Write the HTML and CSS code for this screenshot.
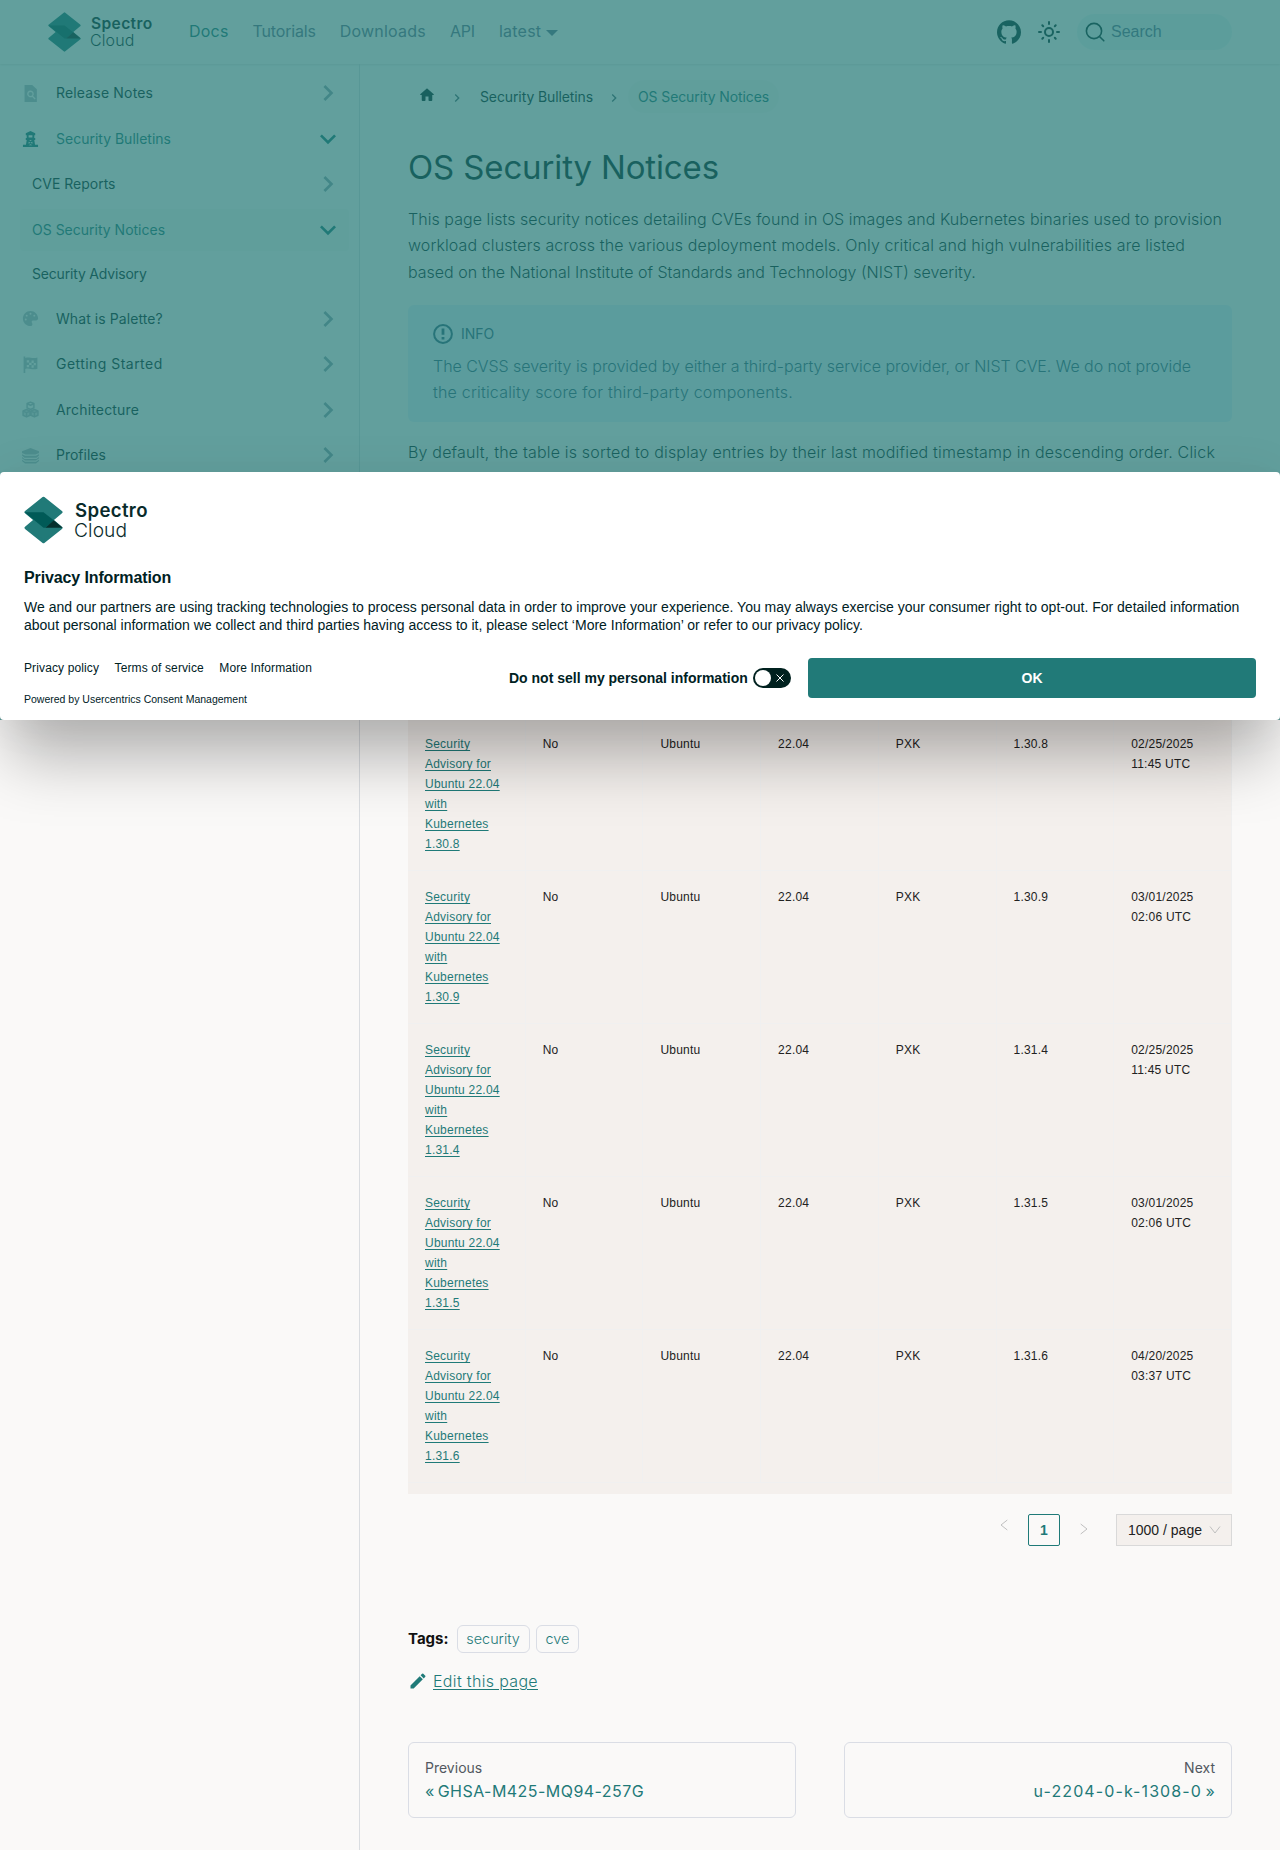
FILE: index.html
```html
<!DOCTYPE html>
<html lang="en">
<head>
<meta charset="utf-8">
<title>OS Security Notices</title>
<link rel="stylesheet" href="styles.css">
</head>
<body>
<svg class="defs" width="0" height="0">
  <symbol id="logo" viewBox="0 0 40 48">
    <g stroke-linejoin="round" stroke-width="3">
      <path d="M20 1.7 38 16 20 31 2 16z" fill="#217a78" stroke="#217a78"/>
      <path d="M20 17 38 32 20 46.3 2 32z" fill="#217a78" stroke="#217a78"/>
    </g>
    <path d="M.6 16H20l10.500 8.300L22 32h-2z" fill="#005a57"/>
    <path d="M30.500 24.300 39.600 32H22z" fill="#06302d"/>
  </symbol>
  <symbol id="chev" viewBox="0 0 24 24"><path d="M7.410 15.410 12 10.830l4.590 4.580L18 14l-6-6-6 6z" fill="currentColor"/></symbol>
</svg>
<header class="navbar">
  <a class="brand"><svg class="brand-mark"><use href="#logo"/></svg><span class="brand-name"><b>Spectro</b><i>Cloud</i></span></a>
  <nav class="nav-links">
    <a class="active">Docs</a><a class="tight">Tutorials</a><a>Downloads</a><a class="tight">API</a><a>latest<i class="caret"></i></a>
  </nav>
  <div class="nav-tools">
    <svg width="24" height="24" viewBox="0 0 24 24" fill="#08302f"><path d="M12 .297c-6.630 0-12 5.373-12 12 0 5.303 3.438 9.800 8.205 11.385.6.113.82-.258.82-.577 0-.285-.01-1.040-.015-2.040-3.338.724-4.042-1.610-4.042-1.610C4.422 18.070 3.633 17.700 3.633 17.700c-1.087-.744.084-.729.084-.729 1.205.084 1.838 1.236 1.838 1.236 1.070 1.835 2.809 1.305 3.495.998.108-.776.417-1.305.76-1.605-2.665-.3-5.466-1.332-5.466-5.930 0-1.310.465-2.380 1.235-3.220-.135-.303-.54-1.523.105-3.176 0 0 1.005-.322 3.300 1.230.96-.267 1.980-.399 3-.405 1.020.006 2.040.138 3 .405 2.280-1.552 3.285-1.230 3.285-1.230.645 1.653.24 2.873.12 3.176.765.84 1.230 1.910 1.230 3.220 0 4.610-2.805 5.625-5.475 5.920.42.36.81 1.096.81 2.220 0 1.606-.015 2.896-.015 3.286 0 .315.21.69.825.57C20.565 22.092 24 17.592 24 12.297c0-6.627-5.373-12-12-12"/></svg>
    <svg width="24" height="24" viewBox="0 0 24 24" fill="none" stroke="#08302f" stroke-width="2" stroke-linecap="round"><circle cx="12" cy="12" r="4"/><path d="M12 2v2M12 20v2M2 12h2M20 12h2M5.300 5.300l.9.9M17.800 17.800l.9.9M5.300 18.700l.9-.9M17.800 6.200l.9-.9"/></svg>
    <div class="search"><svg width="20" height="20" viewBox="0 0 20 20" fill="none" stroke="#08302f" stroke-width="1.600" stroke-linecap="round"><circle cx="9" cy="9" r="7.600"/><path d="m14.500 14.500 4.300 4.300"/></svg><span>Search</span></div>
  </div>
</header>
<div class="layout">
  <aside class="sidebar">
    <a class="item"><svg class="ico" viewBox="0 0 16 20"><path fill-rule="evenodd" d="M1 0h9l5.500 5v15H1zM8 6.500a4 4 0 1 0 2 7.500l3 3 1-1-3-3a4 4 0 0 0-3-6.500zm0 1.700a2.400 2.400 0 1 1 0 4.800 2.400 2.400 0 0 1 0-4.800z" fill="currentColor"/></svg><span class="w2">Release Notes</span><svg class="arr"><use href="#chev"/></svg></a>
    <a class="item on open"><svg class="ico" viewBox="0 0 18 18"><path fill-rule="evenodd" d="M9 1l5 2.500v2h-1v3h1v2h-1l.8 5H17V18H1v-2.500h3.200l.8-5H4v-2h1v-3H4v-2zM7 5.500v2.500h4V5.500zM7.500 10.500 9 11.700l1.500-1.200zM7 12.500v2l2-1zm4 0-2 1 2 1zM7 16.200h4L9 15z" fill="currentColor"/></svg><span>Security Bulletins</span><svg class="arr"><use href="#chev"/></svg></a>
    <a class="item sub"><span>CVE Reports</span><svg class="arr"><use href="#chev"/></svg></a>
    <a class="item sub on open cur"><span>OS Security Notices</span><svg class="arr"><use href="#chev"/></svg></a>
    <a class="item sub leaf"><span class="tight">Security Advisory</span></a>
    <a class="item"><svg class="ico" viewBox="-30 -30 572 572"><path d="M512 256c0 .9 0 1.800 0 2.700c-.4 36.500-33.600 61.300-70.100 61.300H344c-26.500 0-48 21.500-48 48c0 3.400 .4 6.700 1 9.900c2.100 10.200 6.500 20 10.800 29.900c6.100 13.800 12.100 27.500 12.100 42c0 31.800-21.600 60.700-53.400 62c-3.500 .1-7 .2-10.600 .2C114.600 512 0 397.400 0 256S114.600 0 256 0S512 114.600 512 256zM128 288a32 32 0 1 0 -64 0 32 32 0 1 0 64 0zm0-96a32 32 0 1 0 0-64 32 32 0 1 0 0 64zM288 96a32 32 0 1 0 -64 0 32 32 0 1 0 64 0zm96 96a32 32 0 1 0 0-64 32 32 0 1 0 0 64z" fill="currentColor"/></svg><span class="w1">What is Palette?</span><svg class="arr"><use href="#chev"/></svg></a>
    <a class="item"><svg class="ico" viewBox="0 0 16 16"><path fill-rule="evenodd" d="M1.500.5h1.600v1.300c4-1.600 6 1.300 11.400-.3v10.500c-5 1.700-7.500-1.300-11.400.2V16H1.500zM4.500 4v2.200h2.200V4zm4.500.3v2.200h2V4.300zM6.700 6.300v2.200H9V6.300zM4.500 8.500v2.200h2.200V8.500zM9 8.800V11h2V8.800zm2-2.300v2.200h2V6.500z" fill="currentColor"/></svg><span class="w3">Getting Started</span><svg class="arr"><use href="#chev"/></svg></a>
    <a class="item"><svg class="ico" viewBox="0 0 16 16"><g fill="none" stroke="currentColor" stroke-width="1.400" stroke-linejoin="round"><path d="M8 1l3.200 1.400v4L8 8 4.800 6.400v-4zM4.800 2.600 8 4l3.200-1.400"/><path d="M4.300 8l3.200 1.400v4L4.300 15 1 13.400v-4zM11.700 8l3.300 1.400v4L11.700 15l-3.200-1.600v-4z" fill="currentColor" fill-opacity=".45"/><path d="M1 9.600 4.300 11l3.200-1.400M4.300 11v4M8.500 9.600l3.200 1.400L15 9.600M11.700 11v4"/></g></svg><span class="w2">Architecture</span><svg class="arr"><use href="#chev"/></svg></a>
    <a class="item"><svg class="ico" viewBox="0 0 17 16"><path d="M8.500.5 17 3.800v1.700L13.500 7h-10L0 5.500V3.800zM0 6.800 3.200 8.300h10.600L17 6.800V8l-2.500 2.300h-12L0 8zM0 9.500l2.500 2h12l2.500-2v1.300L14 13H3L0 10.800zM0 12.300l3 2h11l3-2v1.200L14 16H3l-3-2.500z" fill="currentColor"/></svg><span>Profiles</span><svg class="arr"><use href="#chev"/></svg></a>
  </aside>
  <main class="main">
    <nav class="crumbs"><svg class="home" viewBox="0 0 24 24"><path d="M10 19v-5h4v5c0 .55.45 1 1 1h3c.55 0 1-.45 1-1v-7h1.700c.46 0 .68-.57.33-.87L12.670 3.600c-.38-.34-.96-.34-1.340 0l-8.360 7.530c-.34.3-.13.87.33.87H5v7c0 .55.45 1 1 1h3c.55 0 1-.45 1-1z" fill="currentColor"/></svg><svg class="sep"><use href="#chev"/></svg><a>Security Bulletins</a><svg class="sep"><use href="#chev"/></svg><a class="pill">OS Security Notices</a></nav>
    <h1>OS Security Notices</h1>
    <p class="para"><span class="a1">This page lists security notices detailing CVEs found in OS images and Kubernetes binaries used to provision</span><br><span class="a2">workload clusters across the various deployment models. Only critical and high vulnerabilities are listed</span><br>based on the National Institute of Standards and Technology (NIST) severity.</p>
    <section class="info">
      <div class="info-head"><svg width="20" height="20" viewBox="0 0 20 20" fill="none" stroke="currentColor" stroke-width="2"><circle cx="10" cy="10" r="8.900"/><path d="M10 4.500v6.300M10 13v2.400" stroke-width="2.800"/></svg><span>INFO</span></div>
      <p><span class="a4">The CVSS severity is provided by either a third-party service provider, or NIST CVE. We do not provide</span><br><span class="a5">the criticality score for third-party components.</span></p>
    </section>
    <p class="para"><span class="a6">By default, the table is sorted to display entries by their last modified timestamp in descending order. Click</span></p>
    <table class="notices">
      <tr><td><a>Security Advisory for Ubuntu 22.04 with Kubernetes 1.30.8</a></td><td>No</td><td>Ubuntu</td><td>22.04</td><td>PXK</td><td>1.30.8</td><td>02/25/2025 11:45 UTC</td></tr>
      <tr><td><a>Security Advisory for Ubuntu 22.04 with Kubernetes 1.30.9</a></td><td>No</td><td>Ubuntu</td><td>22.04</td><td>PXK</td><td>1.30.9</td><td>03/01/2025 02:06 UTC</td></tr>
      <tr><td><a>Security Advisory for Ubuntu 22.04 with Kubernetes 1.31.4</a></td><td>No</td><td>Ubuntu</td><td>22.04</td><td>PXK</td><td>1.31.4</td><td>02/25/2025 11:45 UTC</td></tr>
      <tr><td><a>Security Advisory for Ubuntu 22.04 with Kubernetes 1.31.5</a></td><td>No</td><td>Ubuntu</td><td>22.04</td><td>PXK</td><td>1.31.5</td><td>03/01/2025 02:06 UTC</td></tr>
      <tr><td><a>Security Advisory for Ubuntu 22.04 with Kubernetes 1.31.6</a></td><td>No</td><td>Ubuntu</td><td>22.04</td><td>PXK</td><td>1.31.6</td><td>04/20/2025 03:37 UTC</td></tr>
    </table>
    <div class="table-end"></div>
    <div class="pager">
      <svg class="pg prev" viewBox="0 0 8 12"><path d="M7.300 1 1 6l6.300 5"/></svg>
      <span class="page">1</span>
      <svg class="pg next" viewBox="0 0 8 12"><path d="M.7 1 7 6 .7 11"/></svg>
      <span class="size"><span>1000 / page</span><svg viewBox="0 0 12 8"><path d="M1 .5 6 7l5-6.500"/></svg></span>
    </div>
    <div class="tags"><b>Tags:</b><a>security</a><a>cve</a></div>
    <a class="edit"><svg width="20" height="20" viewBox="0 0 40 40"><path d="m34.500 11.700l-3 3.100-6.300-6.300 3.100-3q0.500-0.500 1.200-0.500t1.100 0.500l3.900 3.900q0.500 0.400 0.500 1.100t-0.500 1.200z m-29.500 17.100l18.400-18.500 6.300 6.300-18.400 18.400h-6.300v-6.200z" fill="currentColor"/></svg><span>Edit this page</span></a>
    <div class="pn">
      <a><small>Previous</small><strong>« GHSA-M425-MQ94-257G</strong></a>
      <a class="nx"><small>Next</small><strong>u-2204-0-k-1308-0 »</strong></a>
    </div>
  </main>
</div>
<div class="shade"></div>
<section class="consent">
  <div class="brand big"><svg class="brand-mark"><use href="#logo"/></svg><span class="brand-name"><b>Spectro</b><i>Cloud</i></span></div>
  <h2>Privacy Information</h2>
  <p>We and our partners are using tracking technologies to process personal data in order to improve your experience. You may always exercise your consumer right to opt-out. For detailed information about personal information we collect and third parties having access to it, please select ‘More Information’ or refer to our privacy policy.</p>
  <div class="consent-foot">
    <div class="legal">
      <div class="links"><a>Privacy policy</a><a>Terms of service</a><a>More Information</a></div>
      <div class="powered">Powered by Usercentrics Consent Management</div>
    </div>
    <div class="optout"><b>Do not sell my personal information</b><span class="toggle"><i></i><svg width="8" height="8" viewBox="0 0 8 8"><path d="m.5.5 7 7m0-7-7 7" stroke="#fff"/></svg></span></div>
    <button class="ok">OK</button>
  </div>
</section>
</body>
</html>
```
FILE: styles.css
```css
* { box-sizing: border-box; }
body {
  margin: 0;
  position: relative;
  height: 1850px;
  overflow: hidden;
  background: #faf9f8;
  color: #092b2b;
  font: 300 16px/26.4px Inter, "Open Sans", sans-serif;
}
p, h1, h2 { margin: 0; }
i { font-style: normal; }
.defs { position: absolute; }

.navbar {
  height: 64px;
  padding: 0 48px;
  display: flex;
  align-items: center;
  background: #faf9f8;
  box-shadow: 0 1px 2px rgba(0,0,0,.1);
}
.brand { display: flex; align-items: center; gap: 10px; width: 141px; color: #092b2b; }
.brand-mark { width: 33px; height: 40px; }
.brand-name { display: flex; flex-direction: column; font: 500 16px/17px Inter, sans-serif; align-items: flex-start; }
.brand-name b { font-weight: 600; font-size: 15.600px; letter-spacing: .35px; }
.brand-name i { font-weight: 300; letter-spacing: .1px; margin-left: -1px; }
.nav-links { display: flex; gap: 24px; color: #66758f; font-weight: 400; letter-spacing: .22px; padding-bottom: 2px; }
.nav-links a { display: flex; align-items: center; }
.nav-links .active { color: #1f7a78; }
.tight { letter-spacing: -.18px; }
.caret { border: 6px solid transparent; border-top-color: currentColor; border-bottom: 0; margin-left: 5px; margin-top: 4px; }
.nav-tools { margin-left: auto; display: flex; align-items: center; gap: 16px; }
.search {
  width: 155px; height: 36px; border-radius: 18px; background: #e6f2f2;
  display: flex; align-items: center; gap: 6px; padding-left: 8px;
  font: 16px "Liberation Sans", sans-serif; color: #5d7691;
}

.layout { display: flex; height: 1786px; }
.sidebar { width: 360px; border-right: 1px solid #dadde1; padding: 8.500px 10px 0 20px; }
.item { display: flex; align-items: center; height: 41.500px; margin-bottom: 4px; padding-left: 2px; font-size: 14px; font-weight: 400; border-radius: 4px; }
.item span { flex: 1; }
.w1 { letter-spacing: .08px; }
.w2 { letter-spacing: .17px; }
.w3 { letter-spacing: .46px; }
.ico { width: 17px; height: 17px; margin-right: 17px; color: #b3bcc4; }
.arr { width: 32px; height: 32px; transform: rotate(90deg); color: #92a4ae; margin-right: 5px; }
.open .arr { transform: rotate(180deg); }
.on, .on .ico, .on .arr { color: #1f7a78; }
.sub { padding-left: 12px; }
.cur { background: #f5f3f1; }
.leaf { height: 39px; margin-bottom: 4.500px; }

.main { width: 920px; padding: 0 48px; display: flex; flex-direction: column; }
.crumbs { display: flex; align-items: center; height: 33px; margin-top: 16px; font-size: 14px; font-weight: 400; letter-spacing: -.11px; }
.home { width: 18px; height: 18px; margin: -4px 0 0 10px; }
.sep { width: 16px; height: 16px; transform: rotate(90deg); margin: 2px 15px 0 13px; color: #4d6b73; }
.crumbs a { padding-top: 1px; }
.crumbs .pill { background: #f6f4f2; border-radius: 17px; padding: 4px 10px 3px; margin-left: -9px; color: #1f7a78; }
h1 { font-size: 33px; line-height: 42px; font-weight: 400; letter-spacing: -.14px; margin: 33px 0 18px; white-space: nowrap; }
.para { white-space: nowrap; }
.a1 { letter-spacing: .053px; }
.a2 { letter-spacing: .097px; }
.a4 { letter-spacing: -.045px; }
.a5 { letter-spacing: .2px; }
.a6 { letter-spacing: .185px; }
.info { margin: 20px 0 17px; height: 117px; border-radius: 6px; background: #e4edf8; color: #37687f; padding: 19px 25px; white-space: nowrap; }
.info-head { display: flex; align-items: center; gap: 8px; height: 20px; margin-bottom: 9px; font-size: 14px; font-weight: 400; }
.info p { line-height: 26px; }
.notices {
  width: 824px; table-layout: fixed; border-collapse: separate; border-spacing: 0;
  margin-top: 252.400px; background: #f4f0ed; font: 12px/20px "Liberation Sans", sans-serif; color: #222;
  letter-spacing: .22px;
}
.notices td { height: 153px; vertical-align: top; padding: 16px 15px 16px 17px; border: 1px solid #f0f0f0; border-width: 0 1px 1px 0; }
.notices a { color: #1f7a78; text-decoration: underline; text-underline-offset: 2px; }
.table-end { height: 11px; background: #f4f0ed; }
.pager { display: flex; justify-content: flex-end; height: 32px; margin-top: 20px; font: 14px/30px "Liberation Sans", sans-serif; color: #222; }
.pg { width: 8px; height: 12px; fill: none; stroke: #bfbfbf; }
.prev { margin: 5px 20px 0 0; }
.next { margin: 9px 28px 0 20px; }
.page { width: 32px; border: 1px solid #1f7a78; border-radius: 2px; text-align: center; color: #1f7a78; font-weight: 700; }
.size { width: 116px; border: 1px solid #d9d9d9; background: #f4f0ed; padding-left: 11px; display: flex; align-items: center; gap: 7px; }
.size svg { width: 12px; height: 8px; fill: none; stroke: #bfbfbf; }
.tags { display: flex; align-items: center; height: 28px; margin-top: 79px; color: #111; }
.tags b { margin-right: 8px; font-weight: 700; font-size: 15px; }
.tags a { height: 28px; border: 1px solid #dadde5; border-radius: 6px; padding: 0 8.800px; margin-right: 6px; font-size: 14.400px; line-height: 26px; color: #1f7a78; }
.edit { display: flex; align-items: center; margin-top: 15px; gap: 5px; color: #1f7a78; letter-spacing: .33px; }
.edit span { text-decoration: underline; text-underline-offset: 2px; }
.pn { display: grid; grid-template-columns: 388px 388px; gap: 48px; margin-top: 47.600px; }
.pn a { display: flex; flex-direction: column; height: 76px; border: 1px solid #dadde5; border-radius: 6px; padding: 15px 16px; }
.pn small { font-size: 14px; line-height: 20px; font-weight: 400; color: #525860; }
.pn strong { font-weight: 400; color: #1f7a78; letter-spacing: .45px; word-spacing: -2px; }
.pn .nx { text-align: right; }
.nx strong { letter-spacing: 1.100px; margin-right: -1px; }

.shade { position: absolute; left: 0; top: 0; width: 100%; height: 720px; background: rgba(33,121,118,.7); }
.consent {
  position: absolute; left: 0; top: 472px; width: 1280px; height: 248px; padding: 24px;
  background: #fff; border-radius: 4px; color: #00211f;
  box-shadow: 0 48px 60px -10px rgba(0,0,0,.28), 0 0 50px rgba(0,0,0,.06);
  font: 14px/18px "Liberation Sans", sans-serif;
}
.big { gap: 12px; height: 48px; }
.big .brand-mark { width: 39px; height: 48px; }
.big .brand-name { font-size: 19.200px; line-height: 20px; }
.big b { font-size: 18.600px; }
.consent h2 { font-size: 16px; line-height: 20px; margin: 24px 0 10px; letter-spacing: -.12px; }
.consent-foot { display: flex; margin-top: 24px; height: 40px; align-items: center; }
.legal { width: 485px; font-size: 12px; line-height: 14px; align-self: flex-start; padding-top: 3px; }
.links { display: flex; gap: 15.500px; letter-spacing: .12px; }
.powered { font-size: 10.500px; margin-top: 17px; }
.optout { width: 299px; display: flex; align-items: center; gap: 5px; }
.toggle { width: 38px; height: 20px; border-radius: 10px; background: #00211f; display: flex; align-items: center; gap: 5px; padding-left: 2px; }
.toggle i { width: 16px; height: 16px; border-radius: 50%; background: #fff; }
.ok { width: 448px; height: 40px; border: 0; border-radius: 4px; background: #217a78; color: #fff; font: 700 14px "Liberation Sans", sans-serif; }
```
